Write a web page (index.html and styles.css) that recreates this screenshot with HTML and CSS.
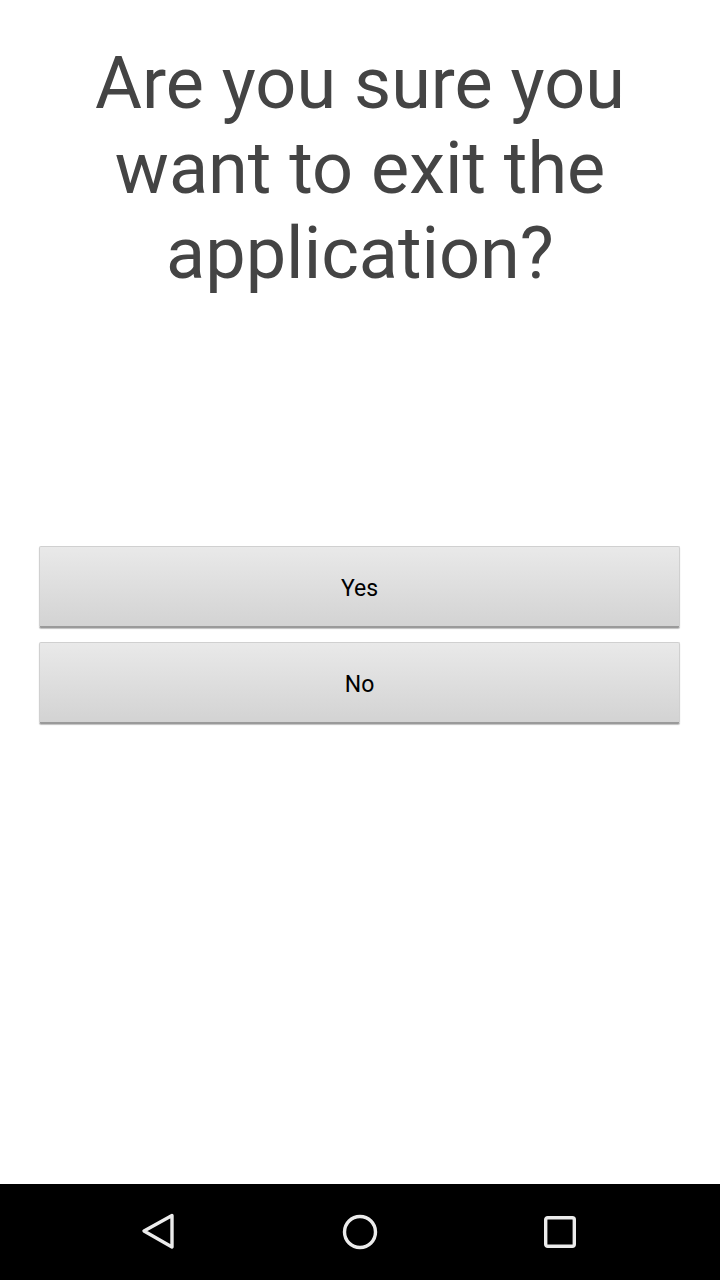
FILE: index.html
```html
<!DOCTYPE html>
<html>
<head>
<meta charset="utf-8">
<link rel="stylesheet" href="styles.css">
</head>
<body>
<div class="screen">
  <main class="content">
    <h1 class="title">Are you sure you want to exit the application?</h1>
    <div class="actions">
      <button class="btn">Yes</button>
      <button class="btn">No</button>
    </div>
  </main>
  <nav class="navbar">
    <svg class="nav-icon" width="40" height="40" viewBox="0 0 40 40"><path d="M32 3.5 L4 19 L32 35 Z" fill="none" stroke="#ececec" stroke-width="3.4" stroke-linejoin="round"/></svg>
    <svg class="nav-icon" width="40" height="40" viewBox="0 0 40 40"><circle cx="20" cy="20" r="15.5" fill="none" stroke="#ececec" stroke-width="3.4"/></svg>
    <svg class="nav-icon" width="40" height="40" viewBox="0 0 40 40"><rect x="5.7" y="5.7" width="28.6" height="28.6" rx="2" fill="none" stroke="#ececec" stroke-width="3.4"/></svg>
  </nav>
</div>
</body>
</html>
```

FILE: styles.css
```css
* { box-sizing: border-box; }
html, body { margin: 0; padding: 0; }
body { background: #fff; font-family: Roboto, "Noto Sans", sans-serif; }
.screen { width: 720px; height: 1280px; display: flex; flex-direction: column; }
.content { flex: 1; display: flex; flex-direction: column; padding-top: 41px; }
.title {
  margin: 0;
  padding: 0 60px;
  font-size: 72px;
  line-height: 85px;
  font-weight: 400;
  color: #444444;
  text-align: center;
}
.actions { display: flex; flex-direction: column; gap: 14px; margin: 250px 40px 0 39px; }
.btn {
  height: 82px;
  border: 1px solid #d0d0d0;
  border-bottom: 2px solid #9a9a9a;
  border-radius: 2px;
  background: linear-gradient(#e9e9e9, #d3d3d3);
  box-shadow: 0 1px 1px rgba(0,0,0,0.25);
  font-family: Roboto, sans-serif;
  font-size: 23px;
  color: #000;
  padding: 3px 0 0 0;
}
.navbar {
  height: 96px;
  background: #000;
  display: flex;
  align-items: center;
  justify-content: space-between;
  padding: 0 140px 0 140px;
}
.nav-icon { display: block; }
```
